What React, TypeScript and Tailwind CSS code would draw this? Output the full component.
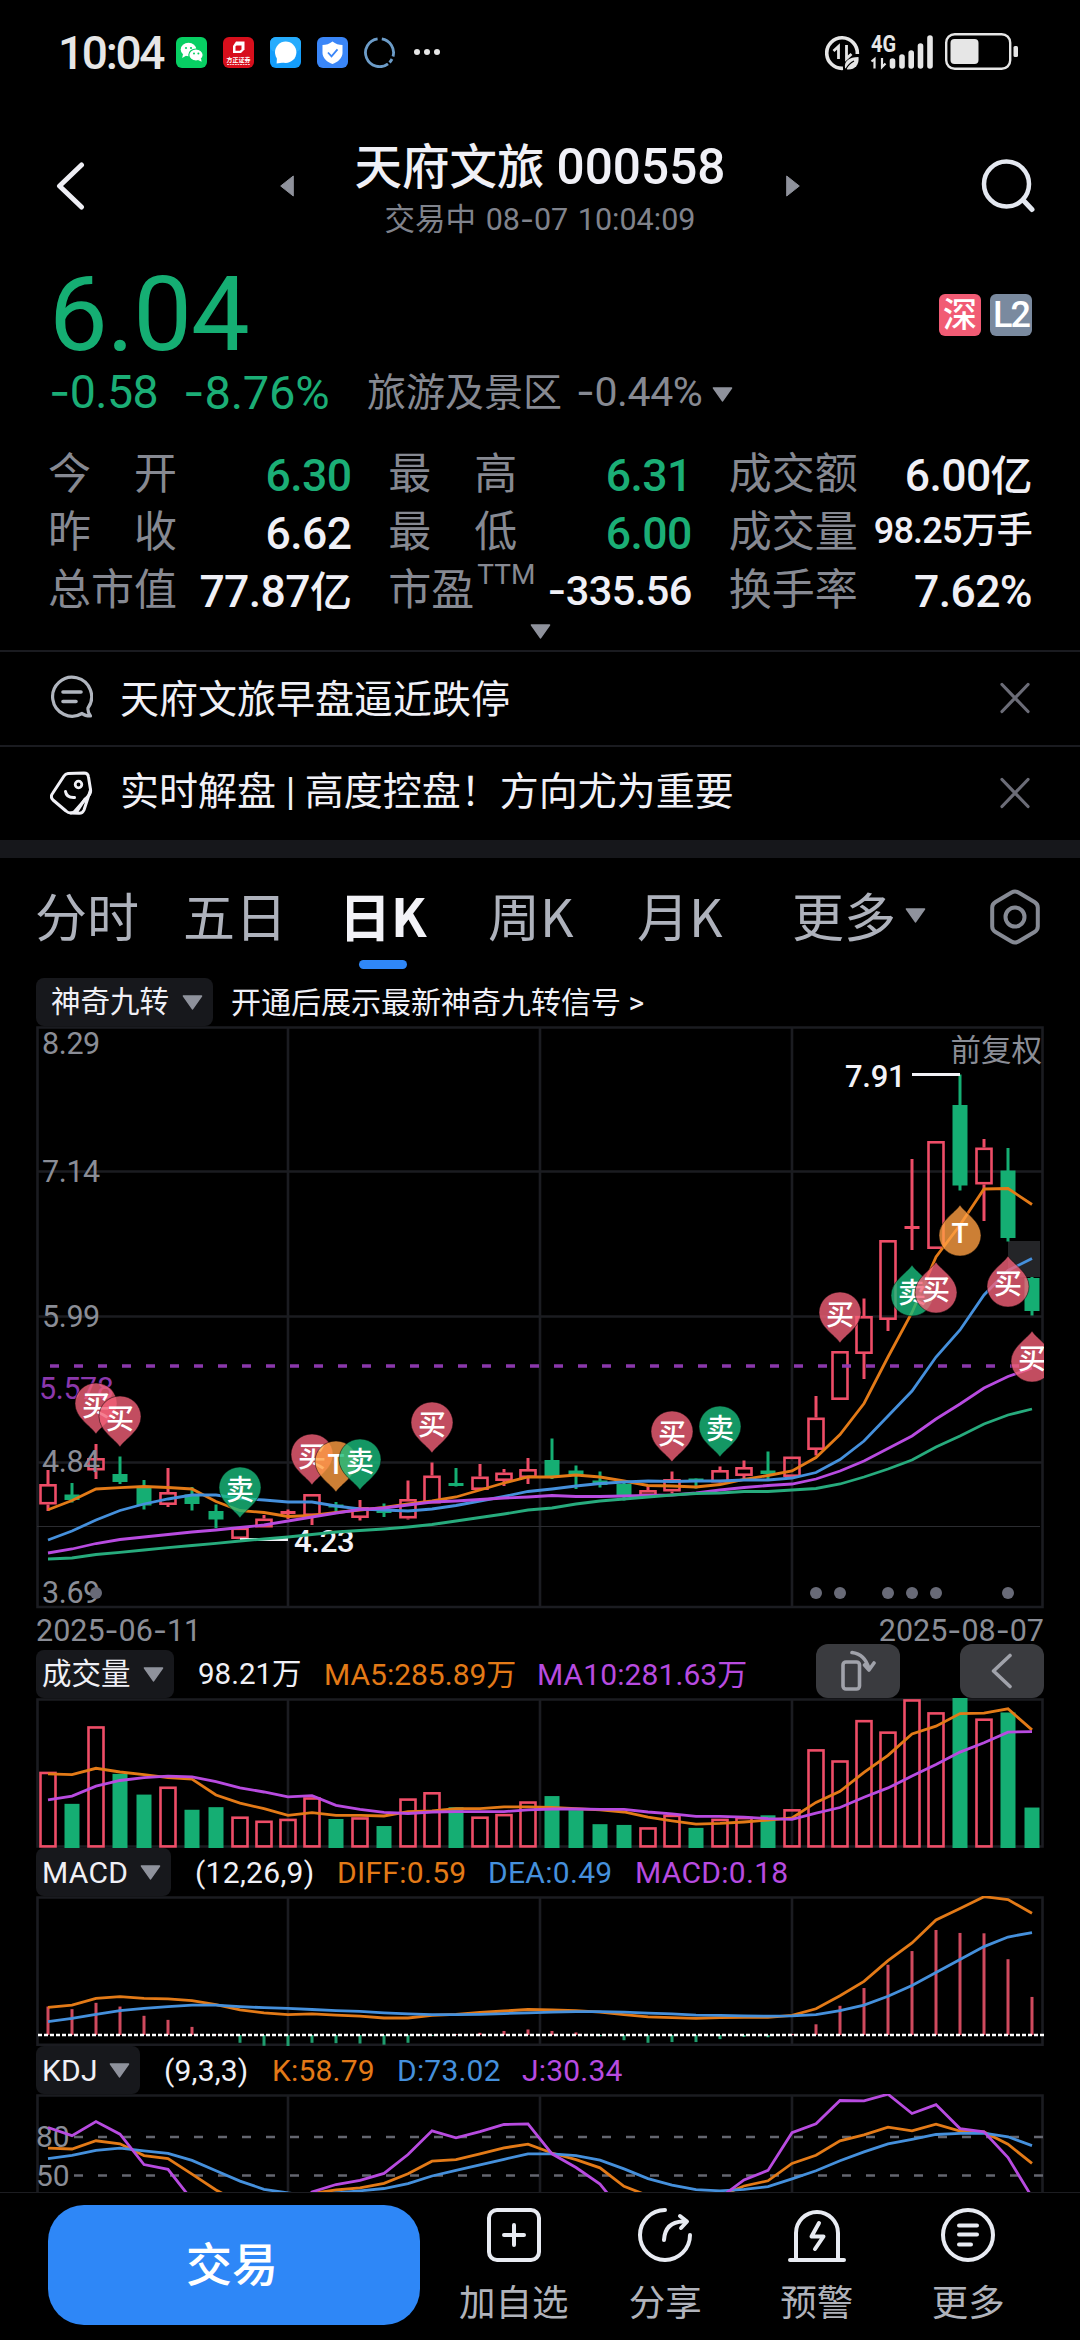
import { Fragment, ReactNode } from 'react'

const RED = '#ee4d67'
const GREEN = '#15ae73'
const ORANGE = '#e37a17'
const BLUE = '#4590dc'
const PURPLE = '#b84be0'
const GRID = '#1b1c21'

// [up, high, top of body, bottom of body, low]
const candles: [number, number, number, number, number][] = [
  [1, 1470, 1484, 1504.5, 1511],
  [0, 1483, 1494.5, 1500, 1502.5],
  [1, 1444, 1458, 1470.5, 1479],
  [0, 1456.5, 1474, 1482, 1484],
  [0, 1480, 1487, 1505.5, 1509.5],
  [1, 1468, 1492, 1505, 1507],
  [0, 1487, 1494.5, 1504, 1510.5],
  [0, 1504.5, 1511, 1519.5, 1528],
  [1, 1527.5, 1527.5, 1539, 1539],
  [1, 1515, 1518.5, 1527.5, 1527.5],
  [1, 1509.5, 1511, 1514, 1519],
  [1, 1494, 1494, 1516, 1525],
  [0, 1502, 1504.5, 1507.5, 1512],
  [1, 1500, 1507, 1518, 1520.5],
  [0, 1503.5, 1510, 1513, 1517],
  [1, 1480.5, 1499, 1518.5, 1519.5],
  [1, 1462.5, 1475.5, 1503.5, 1503.5],
  [0, 1468, 1483, 1486, 1486.5],
  [1, 1464, 1476.5, 1490, 1490.5],
  [1, 1469, 1472.5, 1481, 1486],
  [1, 1458, 1469, 1478, 1484],
  [0, 1438.5, 1460, 1476.5, 1479],
  [0, 1465.5, 1470.5, 1475, 1489],
  [0, 1471.5, 1480.5, 1485, 1487.5],
  [0, 1483, 1484, 1495.5, 1500.5],
  [1, 1485.5, 1490, 1496, 1496],
  [1, 1471.5, 1479, 1491.5, 1493.5],
  [0, 1478.5, 1478.5, 1481, 1488.5],
  [1, 1466.5, 1470, 1482.5, 1483],
  [1, 1460.5, 1467, 1476, 1480],
  [0, 1451.5, 1470.5, 1474, 1479.5],
  [1, 1456.5, 1456.5, 1477, 1477],
  [1, 1396, 1417.5, 1450, 1455.5],
  [1, 1351, 1351, 1400, 1400],
  [1, 1298.5, 1316, 1354, 1379],
  [1, 1240, 1240, 1320, 1331],
  [1, 1159, 1226, 1229, 1250],
  [1, 1141, 1141, 1249, 1249],
  [0, 1074.5, 1105, 1185.5, 1190.5],
  [1, 1139, 1147.5, 1184.5, 1221],
  [0, 1148, 1170.5, 1238, 1241.5],
  [0, 1277, 1278, 1311, 1315.5],
]

const ma5 = [1509.7, 1500.5, 1489, 1487.7, 1486.5, 1487.5, 1489, 1501.5, 1510.5, 1512.5, 1516.5, 1515.5, 1512.5, 1510, 1507.5, 1504, 1501, 1497, 1490, 1483, 1477, 1477, 1475, 1477, 1481, 1485.5, 1486, 1487, 1484.5, 1479.5, 1475.5, 1471, 1457.5, 1434.5, 1403.5, 1357, 1312.5, 1257, 1225, 1189, 1188.5, 1204.5]
const ma10 = [1540, 1531, 1520, 1510.5, 1504, 1499, 1495, 1495, 1498.5, 1500, 1502, 1502, 1506, 1509, 1510, 1511, 1509, 1505.5, 1501, 1496.5, 1491.5, 1489, 1486, 1483.5, 1482, 1481, 1481.5, 1481, 1481, 1480, 1480, 1478, 1472.5, 1459.5, 1441, 1416, 1391, 1357, 1330, 1295, 1270.5, 1258.5]
const ma20 = [1553, 1549, 1543.5, 1539.5, 1537, 1534.5, 1532, 1530, 1527.5, 1525, 1521, 1517, 1513, 1509.5, 1508, 1505, 1502, 1501, 1499.5, 1498, 1497, 1495.5, 1496.5, 1496.5, 1496, 1495.5, 1495, 1493, 1490, 1487.5, 1485.5, 1484, 1479, 1471, 1461, 1448.5, 1436, 1419, 1404, 1388, 1376.5, 1368]
const ma30 = [1559, 1558, 1554.5, 1552.3, 1550, 1547.7, 1545.5, 1543.3, 1541, 1539, 1537, 1534.5, 1532, 1530.5, 1529, 1527, 1524.5, 1521, 1517.5, 1514, 1510, 1508, 1504, 1501, 1499, 1497, 1495, 1493.5, 1493, 1491.5, 1491.5, 1490, 1488.5, 1484, 1477, 1469, 1460, 1447, 1436, 1424, 1415, 1409]

const volume = [410, 497, 287, 416, 472, 450, 513, 506, 531, 542, 537, 479, 538, 533, 557, 482, 465, 506, 531, 524, 490, 476, 514, 552, 554, 560, 526, 562, 537, 532, 528, 511, 349, 379, 270, 301, 214, 249, 210, 266, 250, 507]
const vol5 = [416, 418, 401, 411, 418, 426, 430, 473, 495, 510, 528, 521, 528, 528, 530, 518, 516, 510, 510, 505, 505, 507, 510, 513, 519, 533, 543, 552, 550, 546, 541, 535, 493, 463, 412, 366, 308, 287, 253, 252, 240, 297]
const vol10 = [486, 476, 449, 434, 426, 422, 424, 437, 454, 465, 478, 475, 501, 512, 520, 523, 519, 518, 518, 518, 513, 511, 511, 512, 512, 519, 524, 531, 531, 533, 537, 539, 522, 507, 479, 454, 422, 391, 357, 332, 303, 302]

const macd = [1045, 1052, 1035, 1045, 1070, 1081, 1100, 1121, 1143, 1151, 1152, 1143, 1144, 1145, 1148, 1143, 1124, 1120, 1116, 1111, 1107, 1111, 1115, 1125, 1136, 1143, 1141, 1141, 1133, 1127, 1128, 1119, 1093, 1043, 995, 932, 895, 838, 846, 847, 917, 1019]
const diff = [1047, 1041, 1023, 1018, 1023, 1024, 1029, 1040, 1054, 1062, 1067, 1065, 1068, 1071, 1076, 1076, 1069, 1066, 1061, 1057, 1053, 1054, 1056, 1060, 1067, 1073, 1075, 1077, 1075, 1074, 1074, 1069, 1051, 1016, 977, 921, 873, 811, 780, 748, 756, 793]
const dea = [1086, 1077, 1066, 1056, 1050, 1045, 1041, 1041, 1045, 1048, 1050, 1053, 1056, 1058, 1062, 1065, 1067, 1067, 1066, 1064, 1062, 1060, 1059, 1059, 1060, 1063, 1065, 1068, 1069, 1070, 1071, 1070, 1067, 1056, 1041, 1017, 988, 953, 918, 883, 857, 845]

const kdjK = [1428, 1430, 1408, 1416, 1448, 1456, 1498, 1541, 1575, 1590, 1580, 1550, 1541, 1535, 1523, 1497, 1463, 1459, 1443, 1427, 1417, 1441, 1459, 1481, 1531, 1556, 1580, 1580, 1557, 1530, 1516, 1469, 1447, 1408, 1392, 1371, 1381, 1363, 1382, 1384, 1417, 1469]
const kdjD = [1456, 1447, 1434, 1428, 1435, 1442, 1461, 1489, 1517, 1539, 1549, 1556, 1549, 1543, 1537, 1524, 1503, 1488, 1473, 1458, 1443, 1443, 1448, 1460, 1484, 1510, 1528, 1540, 1543, 1539, 1532, 1511, 1489, 1462, 1438, 1416, 1404, 1391, 1388, 1387, 1397, 1421]
const kdjJ = [1372, 1394, 1356, 1390, 1472, 1485, 1568, 1640, 1680, 1680, 1620, 1546, 1526, 1515, 1496, 1445, 1381, 1400, 1383, 1364, 1362, 1443, 1480, 1525, 1605, 1660, 1660, 1620, 1562, 1514, 1488, 1386, 1362, 1299, 1300, 1282, 1334, 1310, 1375, 1384, 1453, 1560]

const pins: [number, number, string, boolean][] = [
  [2, 1383, '买', false],
  [3, 1396, '买', false],
  [8, 1467, '卖', false],
  [11, 1434, '买', false],
  [12, 1441, 'T', false],
  [13, 1439, '卖', false],
  [16, 1402, '买', false],
  [26, 1411, '买', false],
  [28, 1406, '卖', false],
  [33, 1292, '买', false],
  [36, 1265, '卖', true],
  [37, 1262, '买', true],
  [38, 1205, 'T', true],
  [40, 1256, '买', true],
  [41, 1331, '买', true],
]
const pinColors: Record<string, string> = { 买: '#f26078', 卖: '#19bd7d', T: '#ff9f42' }

const xAt = (i: number) => 48 + 24 * i
// the lower panels share one scale
const sub = (v: number) => 1620 + v / 2.7034

// Roboto's hyphen is too short next to the digits, take Inter's
function Num({ children }: { children: string }) {
  return (
    <>
      {children.split('-').map((part, i) => (
        <Fragment key={i}>
          {i > 0 && <span className="font-[Inter]">-</span>}
          {part}
        </Fragment>
      ))}
    </>
  )
}

function Triangle({ className = '' }: { className?: string }) {
  return (
    <svg className={`shrink-0 ${className}`} width="21" height="15" viewBox="0 0 21 15">
      <path d="M1.5 1h18L10.5 13.8z" fill="#8f929c" stroke="#8f929c" strokeWidth="1.6" strokeLinejoin="round" />
    </svg>
  )
}

function Line({ data, color, y = v => v }: { data: number[]; color: string; y?: (v: number) => number }) {
  return (
    <polyline
      points={data.map((v, i) => `${xAt(i)},${y(v).toFixed(1)}`).join(' ')}
      fill="none"
      stroke={color}
      strokeWidth="2.8"
    />
  )
}

function Frame({ top, bottom }: { top: number; bottom: number }) {
  return (
    <g stroke={GRID} strokeWidth="2.6" fill="none">
      <path d={`M37.5 ${top}H1042.5V${bottom}H37.5Z`} />
      <path d={`M288 ${top}V${bottom}M540 ${top}V${bottom}M792 ${top}V${bottom}`} />
    </g>
  )
}

function Pin({ x, y, label, up }: { x: number; y: number; label: string; up: boolean }) {
  return (
    <g transform={`translate(${x} ${y})`}>
      <path
        d="M0 51C-5 43-21 35-21 20.500A21 20.500 0 0 1 21 20.500C21 35 5 43 0 51Z"
        transform={up ? 'matrix(1 0 0 -1 0 51)' : undefined}
        fill={pinColors[label]}
        fillOpacity="0.8"
        stroke="#000"
        strokeOpacity="0.5"
        strokeWidth="1"
      />
      <text
        x="0"
        y={up ? 38 : 33}
        textAnchor="middle"
        className="fill-white text-[28px] font-medium"
      >
        {label}
      </text>
    </g>
  )
}

function KLine() {
  return (
    <svg className="block shrink-0" width="1008" height="584" viewBox="36 1026 1008 584">
      <Frame top={1027.5} bottom={1607} />
      <path d="M37 1171.500H1043M37 1316.500H1043M37 1462.500H1043" stroke={GRID} strokeWidth="2.6" />
      <path d="M37 1526.500H1040" stroke="#2b2c30" />
      <rect x="1008" y="1241" width="32" height="36" fill="#242528" />
      {candles.map(([up, high, top, bottom, low], i) => {
        const x = xAt(i)
        if (!up) {
          return (
            <g key={i} fill={GREEN}>
              <rect x={x - 1.5} y={high} width="3" height={low - high} />
              <rect x={x - 7.5} y={top} width="15" height={bottom - top} />
            </g>
          )
        }
        return (
          <g key={i} fill={RED}>
            <rect x={x - 1.5} y={high} width="3" height={top - high} />
            <rect x={x - 1.5} y={bottom} width="3" height={low - bottom} />
            {bottom - top > 3.5 ? (
              <rect x={x - 7.5} y={top + 1.3} width="15" height={bottom - top - 2.6} fill="none" stroke={RED} strokeWidth="2.6" />
            ) : (
              <rect x={x - 7.5} y={top} width="15" height="3" />
            )}
          </g>
        )
      })}
      <path d="M50 1366H1032" stroke="#8b38ac" strokeWidth="3.6" strokeDasharray="9 15" />
      <g className="text-[30.500px] tracking-[-0.4px]" fill="#8a8d96">
        <text x="42" y="1054">8.29</text>
        <text x="42" y="1182">7.14</text>
        <text x="42" y="1327">5.99</text>
        <text x="42" y="1472">4.84</text>
        <text x="42" y="1602.500">3.69</text>
        <text x="39" y="1399" fill="#8b38ac">5.578</text>
        <text x="1042" y="1061" textAnchor="end" className="tracking-normal">前复权</text>
      </g>
      <g className="text-[31px] font-medium tracking-[-0.3px]" fill="#f2f2f7">
        <text x="845" y="1087">7.91</text>
        <text x="294" y="1552">4.23</text>
        <rect x="912" y="1073" width="48" height="3" />
        <rect x="240" y="1538" width="48" height="3" />
      </g>
      <Line data={ma5} color={ORANGE} />
      <Line data={ma10} color={BLUE} />
      <Line data={ma20} color={PURPLE} />
      <Line data={ma30} color="#27ab7d" />
      {[2, 32, 33, 35, 36, 37, 40].map(i => (
        <circle key={i} cx={xAt(i)} cy="1593" r="6" fill="#686a77" />
      ))}
      {pins.map(([i, y, label, up]) => (
        <Pin key={i} x={xAt(i)} y={y} label={label} up={up} />
      ))}
    </svg>
  )
}

function VolumeChart() {
  return (
    <svg className="block shrink-0" width="1008" height="150" viewBox="36 1698 1008 150">
      <Frame top={1699.5} bottom={1846.5} />
      {volume.map((v, i) => {
        const y = sub(v)
        return candles[i][0] ? (
          <rect key={i} x={xAt(i) - 7.5} y={y + 1.3} width="15" height={1846.4 - y - 1.3} fill="none" stroke={RED} strokeWidth="2.6" />
        ) : (
          <rect key={i} x={xAt(i) - 7.5} y={y} width="15" height={1848 - y} fill={GREEN} />
        )
      })}
      <Line data={vol5} color={ORANGE} y={sub} />
      <Line data={vol10} color={PURPLE} y={sub} />
    </svg>
  )
}

function MacdChart() {
  const zero = 1122
  return (
    <svg className="block shrink-0" width="1008" height="150" viewBox="36 1896 1008 150">
      <Frame top={1897.5} bottom={2044.7} />
      {macd.map((v, i) => (
        <rect
          key={i}
          x={xAt(i) - 1.5}
          y={sub(Math.min(v, zero))}
          width="3"
          height={Math.abs(v - zero) / 2.7034}
          fill={v < zero ? '#cf4a5e' : '#1f9c6d'}
        />
      ))}
      <path d="M38 2035H1044" stroke="#fff" strokeWidth="2.4" strokeDasharray="4 2" />
      <Line data={diff} color={ORANGE} y={sub} />
      <Line data={dea} color={BLUE} y={sub} />
    </svg>
  )
}

function KdjChart() {
  return (
    <svg className="block shrink-0" width="1008" height="98" viewBox="36 2094 1008 98">
      <Frame top={2095.5} bottom={2240} />
      <path d="M74 2137H1043M74 2175.500H1043" stroke="#64666f" strokeWidth="2.6" strokeDasharray="9 15" />
      <g className="text-[30px]" fill="#8a8d96">
        <text x="36" y="2147">80</text>
        <text x="36" y="2186">50</text>
      </g>
      <Line data={kdjK} color={ORANGE} y={sub} />
      <Line data={kdjD} color={BLUE} y={sub} />
      <Line data={kdjJ} color={PURPLE} y={sub} />
    </svg>
  )
}

function Chip({ className, children }: { className: string; children: ReactNode }) {
  return (
    <div className={`flex h-12 shrink-0 items-center justify-between rounded-lg bg-[#17181c] text-[#f0f0f6] ${className}`}>
      {children}
      <Triangle />
    </div>
  )
}

function StatusBar() {
  return (
    <div className="flex h-[104px] items-center pr-[61px] pl-[58px] text-[#e6e6e6]">
      <span className="mt-0.5 w-[118px] text-[46px] leading-none font-medium tracking-[-2.3px]">10:04</span>
      <div className="flex gap-4">
        <svg width="31" height="31" viewBox="0 0 31 31">
          <rect width="31" height="31" rx="6" fill="#07cf63" />
          <ellipse cx="12.500" cy="12.500" rx="7.800" ry="6.700" fill="#fff" />
          <path d="M7 17l-.8 4 4.200-2.500z" fill="#fff" />
          <ellipse cx="20" cy="18" rx="7.200" ry="6" fill="#fff" stroke="#07cf63" strokeWidth="1.200" />
          <path d="M22 23l3.600 1.800-.6-3.500z" fill="#fff" />
          <g fill="#07cf63">
            <circle cx="10" cy="11" r="1.100" />
            <circle cx="15" cy="11" r="1.100" />
            <circle cx="18" cy="16.500" r="1" />
            <circle cx="22.400" cy="16.500" r="1" />
          </g>
        </svg>
        <svg width="31" height="31" viewBox="0 0 31 31">
          <rect width="31" height="31" rx="6" fill="#d70f1c" />
          <path d="M13 4.500h8.500v8L18 16h-8V9z" fill="#fff" />
          <path d="M13.500 8.500h5v4l-1.700 1.300h-4.300V9.300z" fill="#d70f1c" />
          <text x="15.500" y="25" textAnchor="middle" fill="#fff" className="text-[6px] font-bold">方正证券</text>
          <path d="M4 27.500h23" stroke="#fff" strokeWidth="0.8" strokeDasharray="2 0.600" />
        </svg>
        <svg width="31" height="31" viewBox="0 0 31 31">
          <rect width="31" height="31" rx="6" fill="#149dfb" />
          <rect width="31" height="15" rx="6" fill="#26acfd" />
          <circle cx="15.700" cy="15.300" r="10.700" fill="#fff" />
          <path d="M7 20l-.4 6.500 7-1z" fill="#fff" />
        </svg>
        <svg width="31" height="31" viewBox="0 0 31 31">
          <rect width="31" height="31" rx="6" fill="#3a86f8" />
          <path d="M15.500 4.500c3 2.500 6.500 3.500 10 3.500v8c0 5-5 9.500-10 11-5-1.500-10-6-10-11V8c3.500 0 7-1 10-3.500z" fill="#fff" />
          <path d="M11 15.500l3.500 3.800 6-7" fill="none" stroke="#3a86f8" strokeWidth="1.800" />
        </svg>
        <svg width="31" height="31" viewBox="0 0 31 31" fill="none" stroke="#6c9cc8" strokeWidth="2.800">
          <path d="M17.800 1.800A14 14 0 0 1 29 19.500M28 22A14 14 0 0 1 25.500 25.500M24 26.800A14 14 0 1 1 13.600 1.800" />
        </svg>
      </div>
      <svg className="ml-[18px]" width="28" height="8" viewBox="0 0 28 8" fill="#e6e6e6">
        <circle cx="4" cy="4" r="3" />
        <circle cx="14" cy="4" r="3" />
        <circle cx="24" cy="4" r="3" />
      </svg>
      <svg className="ml-auto" width="194" height="40" viewBox="825 31 194 40">
        <g fill="none" stroke="#e6e6e6" strokeWidth="3.600">
          <path d="M857.300 53A15.300 15.300 0 1 0 843 67.300" />
          <path d="M833.500 50l5-4.500V58M851.500 53l-5 4.500V44" strokeWidth="2.800" />
        </g>
        <path d="M845 67c-1-7 4-11 13.500-11 1 8-4 13-11 12.500z" fill="#e6e6e6" />
        <path d="M846 68c2-4 4-6 8-8" stroke="#000" strokeWidth="1.200" fill="none" />
        <text x="871" y="50.500" fill="#e6e6e6" className="text-[23px] font-bold" textLength="25" lengthAdjust="spacingAndGlyphs">4G</text>
        <path d="M871.500 60.500l3-2.500v9.500M885.500 62.500l-3.500 3.500v-9" fill="none" stroke="#e6e6e6" strokeWidth="2.200" />
        <g stroke="#e6e6e6" strokeWidth="5.600" strokeLinecap="round">
          <path d="M892.500 60v5M902 56v9M911.200 52v13M920.500 45v20M930 37v28" />
        </g>
        <rect x="946.200" y="33.200" width="64" height="34.600" rx="8.500" fill="none" stroke="#e6e6e6" strokeWidth="2.400" />
        <rect x="950.500" y="38" width="28" height="25" rx="4" fill="#e6e6e6" />
        <rect x="1013.500" y="45" width="4.500" height="11" rx="1.500" fill="#e6e6e6" />
      </svg>
    </div>
  )
}

function Header() {
  return (
    <div className="flex h-[164px] items-center justify-between pr-[45px] pl-[55px]">
      <svg width="30" height="50" viewBox="0 0 30 50" fill="none" stroke="#eeeef4" strokeWidth="5" strokeLinecap="round" strokeLinejoin="round">
        <path d="M26.500 4L4.500 25l22 21" />
      </svg>
      <div className="mr-[-8px] ml-[6px] flex w-[520px] items-center justify-between">
        <svg width="14" height="22" viewBox="0 0 14 22">
          <path d="M13.300 1v20L.7 11z" fill="#8f929c" stroke="#8f929c" strokeLinejoin="round" />
        </svg>
        <div className="flex flex-col items-center pt-[7px]">
          <h1 className="text-[47.500px] leading-[58px] font-medium text-[#f0f0f6]">
            天府文旅<span className="ml-3 text-[49.500px]">000558</span>
          </h1>
          <p className="text-[30.500px] leading-[44px] text-[#80838c] [word-spacing:2px]">
            交易中 <Num>08-07 10:04:09</Num>
          </p>
        </div>
        <svg width="14" height="22" viewBox="0 0 14 22">
          <path d="M.7 1v20L13.300 11z" fill="#8f929c" stroke="#8f929c" strokeLinejoin="round" />
        </svg>
      </div>
      <svg width="54" height="54" viewBox="0 0 54 54" fill="none" stroke="#e4e8f0" strokeWidth="4.500" strokeLinecap="round">
        <circle cx="25.500" cy="25" r="22.500" />
        <path d="M43 42l8 8.500" strokeWidth="5" />
      </svg>
    </div>
  )
}

const stats: [string, string, string, string][] = [
  ['今　开', '6.30', 'text-[44.500px] tracking-[-0.6px] text-[#1bae76]', ''],
  ['最　高', '6.31', 'text-[44.500px] tracking-[-0.6px] text-[#1bae76]', ''],
  ['成交额', '6.00', 'text-[44.500px] tracking-[-0.6px]', '亿'],
  ['昨　收', '6.62', 'text-[44.500px] tracking-[-0.6px]', ''],
  ['最　低', '6.00', 'text-[44.500px] tracking-[-0.6px] text-[#1bae76]', ''],
  ['成交量', '98.25', 'text-[36px] tracking-[-0.8px] relative -top-[3px]', '万手'],
  ['总市值', '77.87', 'text-[44.500px] tracking-[-0.6px]', '亿'],
  ['市盈', '-335.56', 'text-[41.500px] tracking-[-0.6px] relative -top-px', ''],
  ['换手率', '7.62%', 'text-[44.500px] tracking-[-0.6px]', ''],
]

function Quote() {
  return (
    <div className="pr-12 pl-[49px]">
      <div className="flex h-[88px] items-center justify-between">
        <span className="relative top-[3px] text-[104.500px] leading-[88px] tracking-[-1px] text-[#15ae73]">6.04</span>
        <div className="mt-1.5 flex gap-[9px] text-white">
          <span className="flex size-[42px] items-center justify-center rounded-md bg-[#f15b74] text-[34px] leading-none font-medium">深</span>
          <span className="flex size-[42px] items-center justify-center rounded-md bg-[#7a8a9f] text-[36px] leading-none font-medium tracking-[-2px]">L2</span>
        </div>
      </div>
      <div className="flex h-[72px] items-center leading-none text-[#868992]">
        <span className="w-[134px] text-[46.500px] tracking-[-0.6px] text-[#1bae76]"><Num>-0.58</Num></span>
        <span className="w-[184px] text-[47px] tracking-[-0.2px] text-[#1bae76]"><Num>-8.76%</Num></span>
        <span className="mt-0.5 w-[209px] text-[39px]">旅游及景区</span>
        <span className="text-[41px] tracking-[-0.4px]"><Num>-0.44%</Num></span>
        <Triangle className="ml-[10px] mt-1" />
      </div>
      <div className="mt-[19px] grid grid-cols-3 gap-x-[38px]">
        {stats.map(([label, value, style, unit], i) => (
          <div key={i} className="flex h-[58px] items-center justify-between">
            <span className="relative -top-0.5 -left-px text-[43px] text-[#868992]">
              {label}
              {label === '市盈' && <span className="absolute -top-1 left-[89px] text-[28px]">TTM</span>}
            </span>
            <span className="text-[#f0f0f6]">
              <span className={`font-medium ${style}`}>
                <Num>{value}</Num>
                {unit && <span className={unit === '亿' ? 'text-[42px]' : 'text-[36px]'}>{unit}</span>}
              </span>
            </span>
          </div>
        ))}
      </div>
      <div className="flex h-[29px] justify-center pt-[3px]">
        <Triangle />
      </div>
    </div>
  )
}

function Close() {
  return (
    <svg className="-mt-0.5 ml-auto" width="30" height="32" viewBox="0 0 30 32" stroke="#6b6c77" strokeWidth="3.200" strokeLinecap="round">
      <path d="M2 2.500l26 27M28 2.500l-26 27" />
    </svg>
  )
}

function News() {
  return (
    <div className="text-[39px] text-[#f0f0f6]">
      <div className="flex h-[95px] items-center border-t-2 border-[#1a1b20] pr-[50px] pl-[50px]">
        <svg className="-mt-1" width="43" height="43" viewBox="0 0 43 43" fill="none" stroke="#b0b5be" strokeWidth="3.200" strokeLinecap="round" strokeLinejoin="round">
          <path d="M38 33A19.500 19.500 0 1 0 32 38.500Q35 41 40.500 41Q37.500 37 38 33Z" />
          <path d="M13 17h18M13 26.500h13" strokeWidth="3.600" />
        </svg>
        <span className="mt-[3px] ml-[27px]">天府文旅早盘逼近跌停</span>
        <Close />
      </div>
      <div className="flex h-[95px] items-center border-t-2 border-[#1a1b20] pr-[50px] pl-[50px]">
        <svg className="-mt-0.5" width="43" height="44" viewBox="0 0 43 44" fill="none" stroke="#f0f0f6" strokeWidth="3" strokeLinecap="round" strokeLinejoin="round">
          <path d="M18 2.500L34 2q4 0 4.500 4L40.500 18.500q.5 3-1 5L25 40q-4.500 4-9 0L3 29q-3-3-.5-6.500L14 5q1.500-2.300 4-2.500z" />
          <path d="M40.500 19L34 39q-1.500 3.500-5 3.300L21 42M35 28l-9 14" />
          <circle cx="28.500" cy="13.500" r="3.300" strokeWidth="2.800" />
          <path d="M15.500 20.500q1 6.500 9 6" />
        </svg>
        <span className="-mt-0.5 ml-[27px] whitespace-pre">实时解盘 | 高度控盘！方向尤为重要</span>
        <Close />
      </div>
      <div className="h-[18px] bg-[#16171b]" />
    </div>
  )
}

function Tabs() {
  return (
    <div className="flex h-[120px] items-center pb-1.5 pl-[35px] font-['Noto_Sans_CJK_SC',sans-serif] text-[52px] leading-none text-[#aeb2bc]">
      <span className="w-[148px]">分时</span>
      <span className="w-[156px]">五日</span>
      <span className="relative w-[149px] font-bold text-[#f2f2f7]">
        日K
        <i className="absolute -bottom-[28px] left-5 h-[9px] w-12 rounded-full bg-[#2f87f7]" />
      </span>
      <span className="w-[149px]">周K</span>
      <span className="w-[155px]">月K</span>
      <span className="w-[113px]">更多</span>
      <Triangle className="mt-px" />
      <svg className="mt-1 ml-[64px]" width="50" height="56" viewBox="0 0 50 56" fill="none" stroke="#868a94" strokeWidth="4">
        <path d="M21.500 3.500q3.500-2 7 0L44.500 13q3.300 2 3.300 5.500v19q0 3.500-3.300 5.500L28.500 52.500q-3.500 2-7 0L5.500 43q-3.300-2-3.300-5.500v-19q0-3.500 3.300-5.500z" />
        <circle cx="25" cy="28" r="9.500" />
      </svg>
    </div>
  )
}

const actions = [
  {
    label: '加自选',
    icon: (
      <>
        <rect x="4" y="2" width="50" height="50" rx="8" />
        <path d="M29 17v20M19 27h20" />
      </>
    ),
  },
  {
    label: '分享',
    icon: (
      <>
        <path d="M29 2A25 25 0 1 0 54 27" />
        <path d="M28 32Q29 14 47 13.500" />
        <path d="M44 8l7 5.500-6 6.500" />
      </>
    ),
  },
  {
    label: '预警',
    icon: (
      <>
        <path d="M8 51V25a21 21 0 0 1 42 0v26M2 52h54" />
        <path d="M31 15l-7.500 13.500h12L27 41" />
      </>
    ),
  },
  {
    label: '更多',
    icon: (
      <>
        <circle cx="29" cy="27" r="25" />
        <path d="M20 17.500h18M20 26.500h18M20 36.500h12" />
      </>
    ),
  },
]

function BottomBar() {
  return (
    <div className="flex h-[148px] items-start border-t border-[#1c1d21] bg-black pt-3 pl-12">
      <button className="h-[120px] w-[372px] rounded-[36px] bg-[#2e87f7] pr-1 text-[46px] font-medium text-white">交易</button>
      <div className="ml-[18px] flex">
        {actions.map(({ label, icon }) => (
          <div key={label} className="flex w-[151.500px] flex-col items-center pt-[3px]">
            <svg width="58" height="54" viewBox="0 0 58 54" fill="none" stroke="#e8ebf2" strokeWidth="4" strokeLinecap="round" strokeLinejoin="round">
              {icon}
            </svg>
            <span className="mt-5 text-[36.500px] leading-[44px] text-[#b0b3bb]">{label}</span>
          </div>
        ))}
      </div>
    </div>
  )
}

export default function App() {
  return (
    <div className="h-[2340px] w-[1080px] overflow-hidden bg-black font-[Roboto,'Noto_Sans_CJK_SC',sans-serif]">
      <StatusBar />
      <Header />
      <Quote />
      <News />
      <Tabs />
      <div className="h-[1214px] overflow-hidden pl-9">
        <div className="flex h-12 items-center gap-[18px] text-[30px] text-[#f0f0f6]">
          <Chip className="w-[177px] pr-[10px] pl-[15px]"><span className="text-[29.500px]">神奇九转</span></Chip>
          <span>开通后展示最新神奇九转信号 &gt;</span>
        </div>
        <KLine />
        <div className="flex h-10 w-[1008px] items-center justify-between text-[30.500px] text-[#8a8d96]">
          <span><Num>2025-06-11</Num></span>
          <span><Num>2025-08-07</Num></span>
        </div>
        <div className="relative flex h-12 w-[1008px] items-center text-[30px] text-[#f0f0f6]">
          <Chip className="w-[138px] pr-[10px] pl-[6px]"><span className="text-[29.500px]">成交量</span></Chip>
          <span className="ml-6 w-[126px] text-[29.500px]">98.21万</span>
          <span className="w-[213px] text-[#e37a17]">MA5:285.89万</span>
          <span className="tracking-[0.1px] text-[#b84be0]">MA10:281.63万</span>
          <div className="absolute right-0 bottom-0 flex gap-[60px]">
            <span className="flex h-[54px] w-[84px] items-center justify-center rounded-xl bg-[#3a3b3f]">
              <svg width="36" height="42" viewBox="0 0 36 42" fill="none" stroke="#a0a2aa" strokeWidth="3.600" strokeLinecap="round" strokeLinejoin="round">
                <rect x="3" y="12" width="16.500" height="27" rx="3" />
                <path d="M12 2.500Q25 4 29 19M24.500 15l4.500 5 5-7" />
              </svg>
            </span>
            <span className="flex h-[54px] w-[84px] items-center justify-center rounded-xl bg-[#3a3b3f]">
              <svg width="22" height="36" viewBox="0 0 22 36" fill="none" stroke="#a0a2aa" strokeWidth="3.600" strokeLinecap="round" strokeLinejoin="round">
                <path d="M19 2.500L2.500 18 19 33.500" />
              </svg>
            </span>
          </div>
        </div>
        <VolumeChart />
        <div className="flex h-12 items-center text-[30px] tracking-[0.3px] text-[#f0f0f6]">
          <Chip className="w-[135px] pr-[10px] pl-[6px]">MACD</Chip>
          <span className="ml-6 w-[142px]">(12,26,9)</span>
          <span className="w-[151px] text-[#e37a17]">DIFF:0.59</span>
          <span className="w-[147px] text-[#4590dc]">DEA:0.49</span>
          <span className="text-[#b84be0]">MACD:0.18</span>
        </div>
        <MacdChart />
        <div className="flex h-12 items-center text-[30px] tracking-[0.2px] text-[#f0f0f6]">
          <Chip className="w-[104px] pr-[10px] pl-[6px]">KDJ</Chip>
          <span className="ml-6 w-[108px]">(9,3,3)</span>
          <span className="w-[125px] text-[#e37a17]">K:58.79</span>
          <span className="w-[125px] text-[#4590dc]">D:73.02</span>
          <span className="text-[#b84be0]">J:30.34</span>
        </div>
        <KdjChart />
      </div>
      <BottomBar />
    </div>
  )
}
